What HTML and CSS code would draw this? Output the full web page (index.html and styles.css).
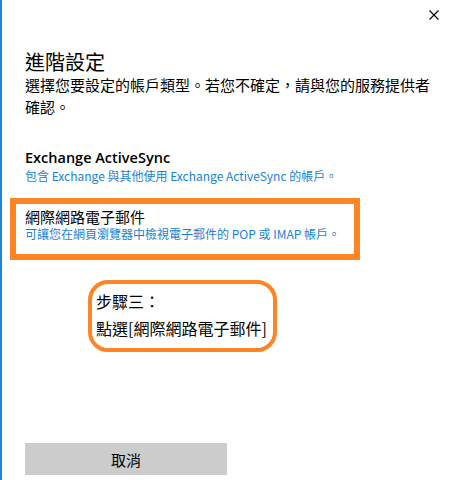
FILE: index.html
```html
<!DOCTYPE html>
<html lang="zh-Hant">
<head>
    <meta charset="UTF-8">
    <meta name="viewport" content="width=device-width, initial-scale=1.0">
    <title>進階設定</title>
    <link rel="stylesheet" href="styles.css">
</head>
<body>
    <div class="dialog">
        <div class="titlebar">
            <button class="close-btn" aria-label="關閉">
                <svg width="10" height="10" viewBox="0 0 10 10">
                    <path d="M0.5 0.5 L9.5 9.5 M9.5 0.5 L0.5 9.5" stroke="#000" stroke-width="1.1" fill="none"/>
                </svg>
            </button>
        </div>

        <div class="content">
            <h1 class="title">進階設定</h1>
            <p class="desc">選擇您要設定的帳戶類型。若您不確定，請與您的服務提供者確認。</p>

            <div class="option">
                <div class="option-name latin">Exchange ActiveSync</div>
                <div class="option-info">包含 Exchange 與其他使用 Exchange ActiveSync 的帳戶。</div>
            </div>

            <div class="option highlight">
                <div class="option-name">網際網路電子郵件</div>
                <div class="option-info">可讓您在網頁瀏覽器中檢視電子郵件的 POP 或 IMAP 帳戶。</div>
            </div>

            <div class="note">
                <div>步驟三：</div>
                <div>點選[網際網路電子郵件]</div>
            </div>
        </div>

        <div class="footer">
            <button class="cancel-btn">取消</button>
        </div>
    </div>
</body>
</html>
```

FILE: styles.css
```css
html, body {
    margin: 0;
    padding: 0;
    background-color: #fff;
}

body {
    font-family: "Noto Sans CJK TC", "Noto Sans", sans-serif;
    color: #000;
}

.dialog {
    height: 480px;
    box-sizing: border-box;
    border-left: 2px solid #1e86d8;
    display: flex;
    flex-direction: column;
}

.titlebar {
    height: 30px;
    display: flex;
    justify-content: flex-end;
}

.close-btn {
    width: 46px;
    height: 30px;
    padding: 0;
    margin: 0;
    border: none;
    background: none;
    display: flex;
    align-items: center;
    justify-content: center;
}

.content {
    padding-left: 23px;
    flex: 1;
}

.title {
    margin: 20px 0 0;
    font-size: 20px;
    font-weight: normal;
    line-height: 24px;
}

.desc {
    margin: 0;
    width: 410px;
    font-size: 15px;
    line-height: 22px;
}

.option {
    margin-top: 31px;
}

.option-name {
    font-size: 15px;
    line-height: 18px;
}

.option-name.latin {
    font-family: "Open Sans", "Noto Sans CJK TC", sans-serif;
    font-weight: 600;
    font-size: 14.5px;
}

.option-info {
    font-size: 12px;
    line-height: 18px;
    color: #1a7fd6;
}

.highlight {
    margin-top: 13px;
    margin-left: -15px;
    width: 329px;
    padding: 4px 0 12px 9px;
    border: 6px solid #fd8526;
}

.highlight .option-info {
    line-height: 16px;
}

.note {
    margin: 20px 0 0 63px;
    width: 177px;
    padding: 4px 0 6px 4px;
    border: 4px solid #fd8526;
    border-radius: 20px;
    font-size: 16px;
    line-height: 27px;
}

.footer {
    padding: 0 0 5px 23px;
}

.cancel-btn {
    width: 202px;
    height: 32px;
    border: none;
    background-color: #ccc;
    font-family: "Noto Sans CJK TC", sans-serif;
    font-size: 15px;
    color: #000;
    padding: 0;
}
```
